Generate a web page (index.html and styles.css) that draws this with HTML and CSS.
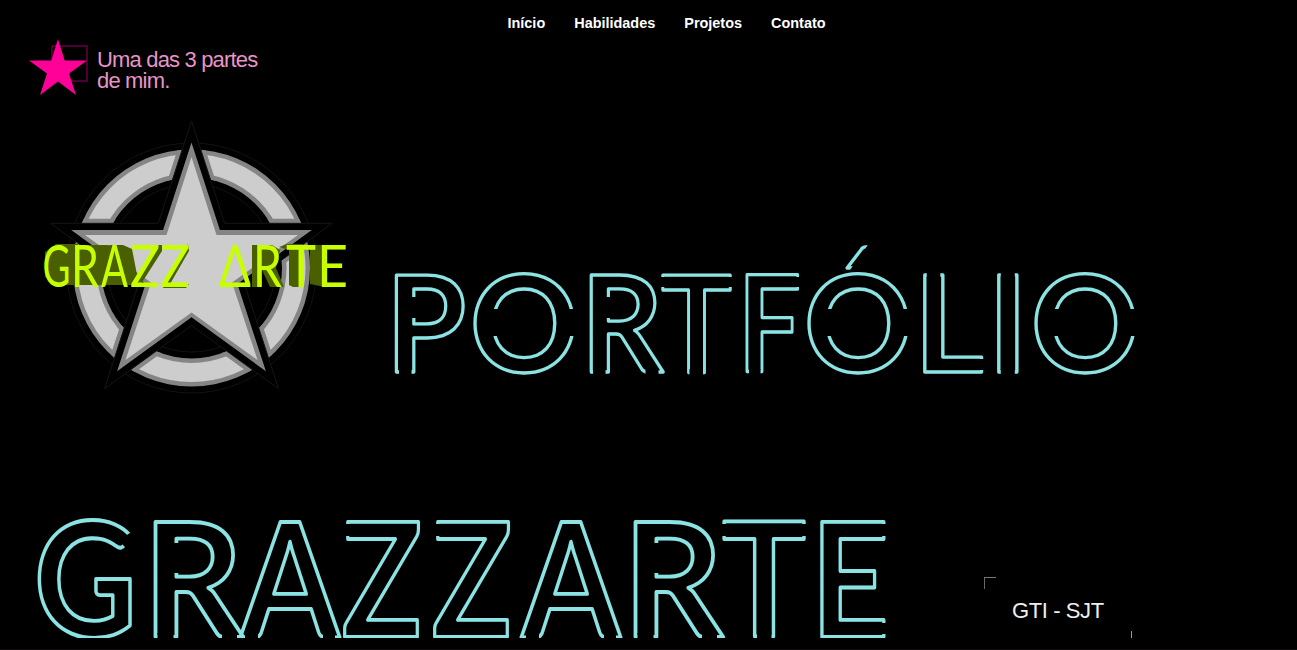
FILE: index.html
```html
<!DOCTYPE html>
<html lang="pt-BR">
<head>
<meta charset="utf-8">
<title>Portfólio GrazzArte</title>
<link rel="stylesheet" href="styles.css">
</head>
<body>
<nav class="menu"><a>Início</a><a>Habilidades</a><a>Projetos</a><a>Contato</a></nav>
<header class="brand">
  <svg class="brand-star" width="60" height="60" viewBox="29 38 60 60"><rect x="52" y="46" width="35" height="35" class="frame"/><path class="pink" d="M58 39l6.700 21.500H87L69 73.500 76 95 58 81.500 40 95l7-21.500L29 60.500h22.300z"/></svg>
  <p class="brand-text">Uma das 3 partes<br>de mim.</p>
</header>
<main>
<section class="hero">
  <svg class="emblem" width="330" height="290" viewBox="30 110 330 290">
    <defs>
      <clipPath id="ring"><path clip-rule="evenodd" d="M73 268a118.500 118.500 0 1 0 237 0a118.500 118.500 0 1 0-237 0zM101 268a90.500 90.500 0 1 0 181 0a90.500 90.500 0 1 0-181 0z"/></clipPath>
      <path id="big" d="M191.500 121L224.700 223.300H332.300L245.300 286.500 278.500 388.700 191.500 325.500 104.500 388.700 137.700 286.500 50.700 223.300H158.300z"/>
    </defs>
    <circle class="faint" cx="191.500" cy="268" r="125"/>
    <circle class="faint" cx="191.500" cy="268" r="84"/>
    <g clip-path="url(#ring)"><circle class="ring-edge" cx="191.500" cy="268" r="104.500"/><circle class="ring-fill" cx="191.500" cy="268" r="104.500"/><use href="#big" class="gap"/></g>
    <use href="#big" class="shadow-star"/>
    <path class="star-edge" d="M191.500 142.500L219.900 230H311.800L237.400 284 265.900 371.300 191.500 317.300 117.100 371.300 145.600 284 71.200 230H163.100z"/>
    <path class="star" d="M191.500 157L216.500 235H298L232 282.500 257.500 360 191.500 312.500 125.500 360 151 282.500 85 235H166.500z"/>
    <g class="depth"><path d="M56 244H78V285L57 285 45 277V252z"/><path d="M74 245H106L123 246 125 285H74z"/><path d="M110 245L123 245 132 249 139 285H120zM133 287L158 245H162V251L141 284H156L153 287zM163 288L188 244L189 251L170 284H189L186 288z"/><path d="M252 245L272 245 280 250 276 268 284 287H270L262 270V287H252zM279 247L287 244H303V287H293L289 285V250zM310 245H325V287L310 284z"/></g>
    <text class="logo-text" y="287"><tspan x="42.500" textLength="28" lengthAdjust="spacingAndGlyphs">G</tspan><tspan x="71" textLength="28" lengthAdjust="spacingAndGlyphs">R</tspan><tspan x="101" textLength="27" lengthAdjust="spacingAndGlyphs">A</tspan><tspan x="130" textLength="30" lengthAdjust="spacingAndGlyphs">Z</tspan><tspan x="160" textLength="30" lengthAdjust="spacingAndGlyphs">Z</tspan> <tspan x="219" textLength="32" lengthAdjust="spacingAndGlyphs">Δ</tspan><tspan x="253" textLength="29" lengthAdjust="spacingAndGlyphs">R</tspan><tspan x="286" textLength="30" lengthAdjust="spacingAndGlyphs">T</tspan><tspan x="317" textLength="31" lengthAdjust="spacingAndGlyphs">E</tspan></text>
  </svg>
  <svg class="title" width="780" height="150" viewBox="380 235 780 150">
    <text class="neon first" y="371.500"><tspan x="386" textLength="80" lengthAdjust="spacingAndGlyphs">P</tspan><tspan x="470">O</tspan><tspan x="581" textLength="82" lengthAdjust="spacingAndGlyphs">R</tspan><tspan x="661" textLength="71" lengthAdjust="spacingAndGlyphs">T</tspan><tspan x="738" textLength="63" lengthAdjust="spacingAndGlyphs">F</tspan><tspan x="804">Ó</tspan><tspan x="914">L</tspan><tspan x="988">I</tspan><tspan x="1031">O</tspan></text>
    <g class="openings">
      <path d="M399 369h12.500v6h-12.500zM410 297h8v21h-8z"/>
      <path d="M563 309h17v27h-17zM488 309h14v27h-14z"/>
      <path d="M593 369h12.500v6h-12.500zM603 297h10v21h-10zM645.500 369h13v6h-13z"/>
      <path d="M658 277h8v10h-8zM727 277h8v10h-8zM689.500 369h13.500v6h-13.500z"/>
      <path d="M793 277h9v10h-9zM749 369h11.500v6h-11.500z"/>
      <path d="M896 309h17v27h-17zM821 309h14v27h-14zM870 242L890 242V264L870 270H850z"/>
      <path d="M926.800 268h13.500v9h-13.500zM979 359h9v11h-9z"/>
      <path d="M1000.800 268h14v9h-14zM1000.800 369h14v6h-14z"/>
      <path d="M1123 309h17v27h-17zM1048 309h14v27h-14z"/>
    </g>
  </svg>
</section>
<section class="lower">
  <svg class="title2" width="880" height="138" viewBox="20 500 880 138">
    <text class="neon second" y="637"><tspan x="34" textLength="103" lengthAdjust="spacingAndGlyphs">G</tspan><tspan x="143" textLength="100" lengthAdjust="spacingAndGlyphs">R</tspan><tspan x="241" textLength="98" lengthAdjust="spacingAndGlyphs">A</tspan><tspan x="342" textLength="80" lengthAdjust="spacingAndGlyphs">Z</tspan><tspan x="432" textLength="80" lengthAdjust="spacingAndGlyphs">Z</tspan><tspan x="522" textLength="98" lengthAdjust="spacingAndGlyphs">A</tspan><tspan x="623" textLength="100" lengthAdjust="spacingAndGlyphs">R</tspan><tspan x="722" textLength="84" lengthAdjust="spacingAndGlyphs">T</tspan><tspan x="811" textLength="78" lengthAdjust="spacingAndGlyphs">E</tspan></text>
    <g class="openings">
      <path d="M157.500 633h16v6h-16zM637.500 633h16v6h-16zM245 634h13v5h-13zM526 634h13v5h-13zM757 633h14.500v6h-14.500zM222 634h15v5h-15zM702 634h15v5h-15zM323 634h12v5h-12zM604 634h12v5h-12z"/>
      <path d="M171 543h9v30h-9zM651 543h9v30h-9zM128 534L138 530 130 552 121 543z"/>
      <path d="M719 524h8v12h-8zM801 524h9v12h-9zM343 524h8v12h-8zM433 524h8v12h-8z"/>
      <path d="M880 524h9v12h-9zM880 623h9v11h-9z"/>
    </g>
  </svg>
  <div class="tag"><span>GTI - SJT</span></div>
</section>
</main>
</body>
</html>
```
FILE: styles.css
```css
body{margin:0;background:#000;color:#fff;font-family:"Liberation Sans",Arial,sans-serif;height:649px;border-bottom:1px solid #140c0e;overflow:hidden}
.menu{display:flex;gap:29px;padding:15px 0 0 507.5px;height:23px;font-size:14.45px;line-height:16px;font-weight:bold}
.brand{display:flex;height:72px;padding-left:29px}
.brand-star{flex:none}
.frame{fill:none;stroke:#7d0050;stroke-width:1.2}
.pink{fill:#ff0099}
.brand-text{margin:11px 0 0 8px;font-size:22px;line-height:21px;letter-spacing:-.83px;color:#e794c7}
.hero{display:flex;height:390px;padding-left:30px}
.emblem{flex:none}
.title{flex:none;margin:125px 0 0 20px;overflow:visible}
.faint{fill:none;stroke:#121212}
.ring-edge{fill:none;stroke:#858585;stroke-width:30}
.ring-fill{fill:none;stroke:#cdcdcd;stroke-width:19}
.gap{fill:#000;stroke:#858585;stroke-width:9}
.shadow-star{fill:#000;stroke:#151515}
.star-edge{fill:#858585}
.star{fill:#cdcdcd}
.depth{fill:#4a6000}
.logo-text{font:400 58px Lato,sans-serif;fill:#c8ff00}
.neon{font-family:Lato,sans-serif;font-weight:700;fill:none;stroke:#8ce3e3;stroke-width:3.3;stroke-linejoin:round}
.first{font-size:134px}
.second{font-size:159px;stroke-width:3.8}
.openings{fill:#000}
.lower{display:flex;padding-left:20px}
.title2{flex:none}
.tag{display:flex;margin:77px 0 0 84px;width:149px;height:61px;overflow:hidden;
 background:linear-gradient(#777,#777) 0 0/12px 1px no-repeat,linear-gradient(#666,#666) 0 0/1px 12px no-repeat,linear-gradient(#999,#999) 147px 54px/1px 7px no-repeat}
.tag span{margin:21px 0 0 28px;font-size:22px;line-height:26px;letter-spacing:-.4px;color:#eee}
```
